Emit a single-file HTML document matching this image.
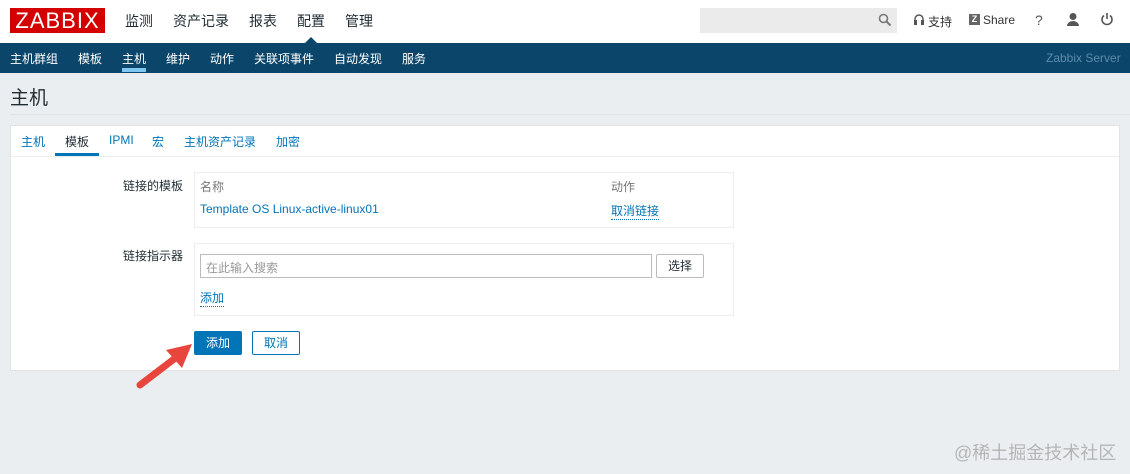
<!DOCTYPE html>
<html><head><meta charset="utf-8"><style>
*{margin:0;padding:0;box-sizing:border-box}
body{width:1130px;height:474px;background:#ebeef0;font-family:"Liberation Sans","Noto Sans CJK SC",sans-serif;position:relative;overflow:hidden;color:#1f2c33}
.a{position:absolute;white-space:nowrap}
.hdr{position:absolute;left:0;top:0;width:1130px;height:43px;background:#fff}
.bar{position:absolute;left:0;top:43px;width:1130px;height:30px;background:#0b466a}
.top{font-size:14px;color:#1f2c33;top:11px}
.sub{font-size:12px;color:#fff;top:50px}
.lnk{color:#0275b8}
.card{position:absolute;left:10px;top:125px;width:1110px;height:246px;background:#fff;border:1px solid #dfe4e7}
.box{position:absolute;border:1px solid #ebeef0;background:#fff}
.dot{border-bottom:1px dotted #0275b8}
</style></head><body>
<div class="hdr"></div>
<div class="a" style="left:10px;top:8px;width:95px;height:25px;background:#d40000;color:#fff;font-size:22px;line-height:25px;text-align:center;letter-spacing:1px">ZABBIX</div>
<div class="a top" style="left:125px">监测</div>
<div class="a top" style="left:173px">资产记录</div>
<div class="a top" style="left:249px">报表</div>
<div class="a top" style="left:297px">配置</div>
<div class="a top" style="left:345px">管理</div>
<div class="a" style="left:700px;top:8px;width:197px;height:25px;background:#ebebeb"></div>
<svg class="a" style="left:878px;top:13px" width="14" height="14"><circle cx="5.5" cy="5.5" r="4" fill="none" stroke="#777" stroke-width="1.6"/><path d="M8.5 8.5L12.5 12.5" stroke="#777" stroke-width="2"/></svg>
<svg class="a" style="left:913px;top:13px" width="12" height="13"><path d="M2 8V6a4 4 0 0 1 8 0v2" fill="none" stroke="#555" stroke-width="1.5"/><rect x="1" y="7" width="3" height="5" fill="#555"/><rect x="8" y="7" width="3" height="5" fill="#555"/></svg>
<div class="a" style="left:928px;top:13px;font-size:12px;color:#333">支持</div>
<div class="a" style="left:969px;top:14px;width:11px;height:11px;background:#666;color:#fff;font-size:9px;line-height:11px;text-align:center;font-weight:bold">Z</div>
<div class="a" style="left:983px;top:13px;font-size:12px;color:#333">Share</div>
<div class="a" style="left:1035px;top:12px;font-size:14px;color:#555">?</div>
<svg class="a" style="left:1066px;top:12px" width="14" height="14"><circle cx="7" cy="4.5" r="3.5" fill="#555"/><path d="M1 14a6 5 0 0 1 12 0z" fill="#555"/></svg>
<svg class="a" style="left:1100px;top:12px" width="14" height="14"><path d="M4 3.5a5 5 0 1 0 6 0" fill="none" stroke="#555" stroke-width="1.6"/><path d="M7 1v6" stroke="#555" stroke-width="1.6"/></svg>
<div class="bar"></div>
<div class="a" style="left:304px;top:37px;width:0;height:0;border-left:7px solid transparent;border-right:7px solid transparent;border-bottom:7px solid #0b466a"></div>
<div class="a sub" style="left:10px">主机群组</div>
<div class="a sub" style="left:78px">模板</div>
<div class="a sub" style="left:122px">主机</div>
<div class="a" style="left:122px;top:68px;width:24px;height:4px;background:#81c7f0"></div>
<div class="a sub" style="left:166px">维护</div>
<div class="a sub" style="left:210px">动作</div>
<div class="a sub" style="left:254px">关联项事件</div>
<div class="a sub" style="left:334px">自动发现</div>
<div class="a sub" style="left:402px">服务</div>
<div class="a" style="left:1046px;top:51px;font-size:12px;color:#5d8aab">Zabbix Server</div>
<div class="a" style="left:10px;top:83px;font-size:19px;color:#1f2c33">主机</div>
<div class="a" style="left:10px;top:114px;width:1120px;height:1px;background:#dfe4e7"></div>
<div class="card"></div>
<div class="a" style="left:11px;top:156px;width:1108px;height:1px;background:#ebeef0"></div>
<div class="a lnk" style="left:21px;top:133px;font-size:12px">主机</div>
<div class="a" style="left:65px;top:133px;font-size:12px">模板</div>
<div class="a" style="left:55px;top:153px;width:44px;height:3px;background:#0275b8"></div>
<div class="a lnk" style="left:109px;top:133px;font-size:12px">IPMI</div>
<div class="a lnk" style="left:152px;top:133px;font-size:12px">宏</div>
<div class="a lnk" style="left:184px;top:133px;font-size:12px">主机资产记录</div>
<div class="a lnk" style="left:276px;top:133px;font-size:12px">加密</div>
<div class="a" style="left:123px;top:177px;font-size:12px">链接的模板</div>
<div class="box" style="left:194px;top:172px;width:540px;height:56px"></div>
<div class="a" style="left:200px;top:178px;font-size:12px;color:#777">名称</div>
<div class="a" style="left:611px;top:178px;font-size:12px;color:#777">动作</div>
<div class="a lnk" style="left:200px;top:202px;font-size:12px">Template OS Linux-active-linux01</div>
<div class="a lnk dot" style="left:611px;top:202px;font-size:12px">取消链接</div>
<div class="a" style="left:123px;top:247px;font-size:12px">链接指示器</div>
<div class="box" style="left:194px;top:243px;width:540px;height:73px"></div>
<div class="a" style="left:200px;top:254px;width:452px;height:24px;border:1px solid #bcbcbc;font-size:12px;color:#999;padding:4px 5px">在此输入搜索</div>
<div class="a" style="left:656px;top:254px;width:48px;height:24px;border:1px solid #bcbcbc;font-size:12px;text-align:center;line-height:22px;border-radius:2px">选择</div>
<div class="a lnk dot" style="left:200px;top:289px;font-size:12px">添加</div>
<div class="a" style="left:194px;top:331px;width:48px;height:24px;background:#0275b8;color:#fff;font-size:12px;text-align:center;line-height:24px;border-radius:2px">添加</div>
<div class="a" style="left:252px;top:331px;width:48px;height:24px;border:1px solid #0275b8;color:#0275b8;font-size:12px;text-align:center;line-height:22px;border-radius:2px">取消</div>
<svg class="a" style="left:130px;top:330px" width="70" height="65"><path d="M10 55L48 26" stroke="#e8453c" stroke-width="7" stroke-linecap="round"/><path d="M62 14L36 20L52 38Z" fill="#e8453c"/></svg>
<div class="a" style="left:954px;top:439px;font-size:18px;color:#b5b5b5">@稀土掘金技术社区</div>
</body></html>
